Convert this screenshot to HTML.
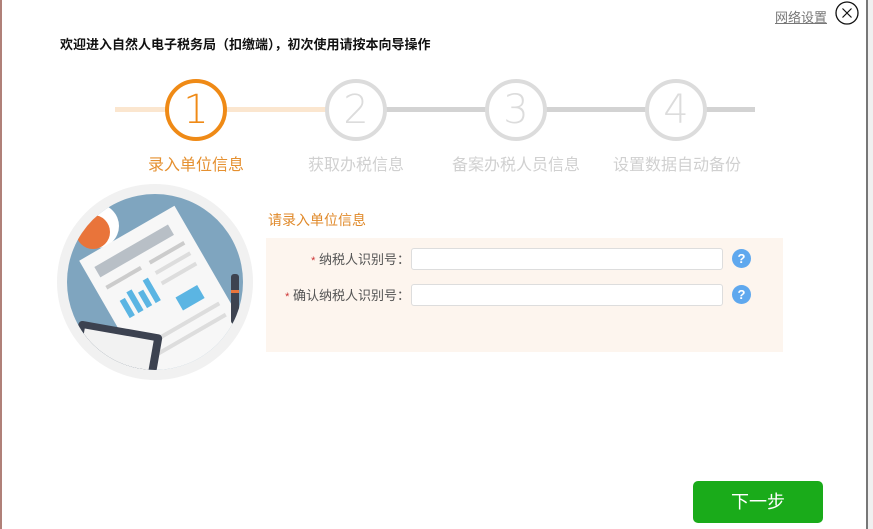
<!DOCTYPE html>
<html><head><meta charset="utf-8"><style>
body{margin:0;width:873px;height:529px;background:#fff;position:relative;overflow:hidden;font-family:"Liberation Sans","Noto Sans CJK SC",sans-serif}
.a{position:absolute}
.lbl{font-size:16px;color:#d0d0d0;top:151px;white-space:nowrap}
.fl{font-size:13px;color:#555;text-align:right;width:145px;left:265px}
.fl b{color:#c33;font-weight:normal;font-size:11px}
.in{left:411px;width:310px;height:20px;border:1px solid #ddd;border-radius:3px;background:#fff}
.q{left:732px;width:19px;height:19px;border-radius:50%;background:#5fa8ee;color:#fff;font-size:13px;font-weight:bold;text-align:center;line-height:19px}
.st{width:54px;height:54px;border:4px solid #dcdcdc;border-radius:50%;background:#fff;text-align:center;line-height:54px;font-size:40px;color:#dcdcdc;font-family:"DejaVu Sans",sans-serif;font-weight:200;top:79px}
</style></head><body>
<div class="a" style="left:0;top:0;width:2px;height:529px;background:#b08078"></div>
<div class="a" style="left:866px;top:0;width:2px;height:529px;background:#777"></div>
<div class="a" style="left:868px;top:0;width:5px;height:529px;background:#f0f0f0"></div>
<div class="a" style="left:775px;top:7px;font-size:13px;color:#777;text-decoration:underline">网络设置</div>
<svg class="a" style="left:834px;top:1px" width="26" height="26"><circle cx="13" cy="12" r="11" fill="#fff" stroke="#111" stroke-width="1.3"/><path d="M8.5 7.5L17.5 16.5M17.5 7.5L8.5 16.5" stroke="#111" stroke-width="1.2"/></svg>
<div class="a" style="left:60px;top:34px;font-size:13px;font-weight:bold;color:#111">欢迎进入自然人电子税务局（扣缴端），初次使用请按本向导操作</div>
<div class="a" style="left:115px;top:107px;width:215px;height:5px;background:#fbe6cf"></div>
<div class="a" style="left:330px;top:107px;width:425px;height:5px;background:#d3d3d3"></div>
<div class="a st" style="left:165px;border-color:#ef8a16;color:#ef8a16">1</div>
<div class="a st" style="left:325px">2</div>
<div class="a st" style="left:485px">3</div>
<div class="a st" style="left:645px">4</div>
<div class="a lbl" style="left:148px;color:#e59030">录入单位信息</div>
<div class="a lbl" style="left:308px">获取办税信息</div>
<div class="a lbl" style="left:452px">备案办税人员信息</div>
<div class="a lbl" style="left:613px">设置数据自动备份</div>
<svg class="a" style="left:55px;top:182px" width="200" height="200">
<defs><clipPath id="c"><circle cx="100" cy="100" r="88"/></clipPath></defs>
<circle cx="100" cy="100" r="98" fill="#f1f1f1"/>
<circle cx="100" cy="100" r="88" fill="#7fa5bf"/>
<g clip-path="url(#c)">
<circle cx="42" cy="44" r="22" fill="#fff"/><circle cx="38" cy="50" r="17" fill="#e9743a"/>
<g transform="rotate(-30 100 110)"><rect x="50" y="45" width="110" height="150" fill="#f7f7f7"/>
<rect x="60" y="58" width="85" height="12" fill="#b8bfc6"/>
<rect x="60" y="80" width="40" height="4" fill="#ccc"/><rect x="110" y="80" width="40" height="4" fill="#ccc"/>
<rect x="110" y="92" width="40" height="4" fill="#ddd"/><rect x="110" y="104" width="40" height="4" fill="#ddd"/>
<rect x="65" y="100" width="6" height="20" fill="#5bb5e3"/><rect x="75" y="96" width="6" height="24" fill="#5bb5e3"/><rect x="85" y="102" width="6" height="18" fill="#5bb5e3"/><rect x="95" y="94" width="6" height="26" fill="#5bb5e3"/>
<rect x="115" y="125" width="25" height="15" fill="#5bb5e3"/>
<rect x="60" y="150" width="90" height="4" fill="#ddd"/><rect x="60" y="163" width="90" height="4" fill="#ddd"/></g>
<rect x="20" y="145" width="85" height="60" rx="4" fill="#3c4250" transform="rotate(10 60 165)"/>
<rect x="27" y="152" width="70" height="50" fill="#f2f2f2" transform="rotate(10 60 165)"/>
<rect x="176" y="92" width="8" height="50" rx="3" fill="#3d4350"/><rect x="176" y="108" width="8" height="3" fill="#e9743a"/>
</g>
</svg>
<div class="a" style="left:268px;top:210px;font-size:14px;color:#e08a2b">请录入单位信息</div>
<div class="a" style="left:266px;top:238px;width:517px;height:114px;background:#fdf5ee"></div>
<div class="a fl" style="top:249px"><b>*</b> 纳税人识别号：</div>
<div class="a in" style="top:248px"></div>
<div class="a q" style="top:249px">?</div>
<div class="a fl" style="top:285px"><b>*</b> 确认纳税人识别号：</div>
<div class="a in" style="top:284px"></div>
<div class="a q" style="top:285px">?</div>
<div class="a" style="left:693px;top:481px;width:130px;height:42px;border-radius:5px;background:#1aab1a;color:#fff;font-size:18px;text-align:center;line-height:42px">下一步</div>
</body></html>
